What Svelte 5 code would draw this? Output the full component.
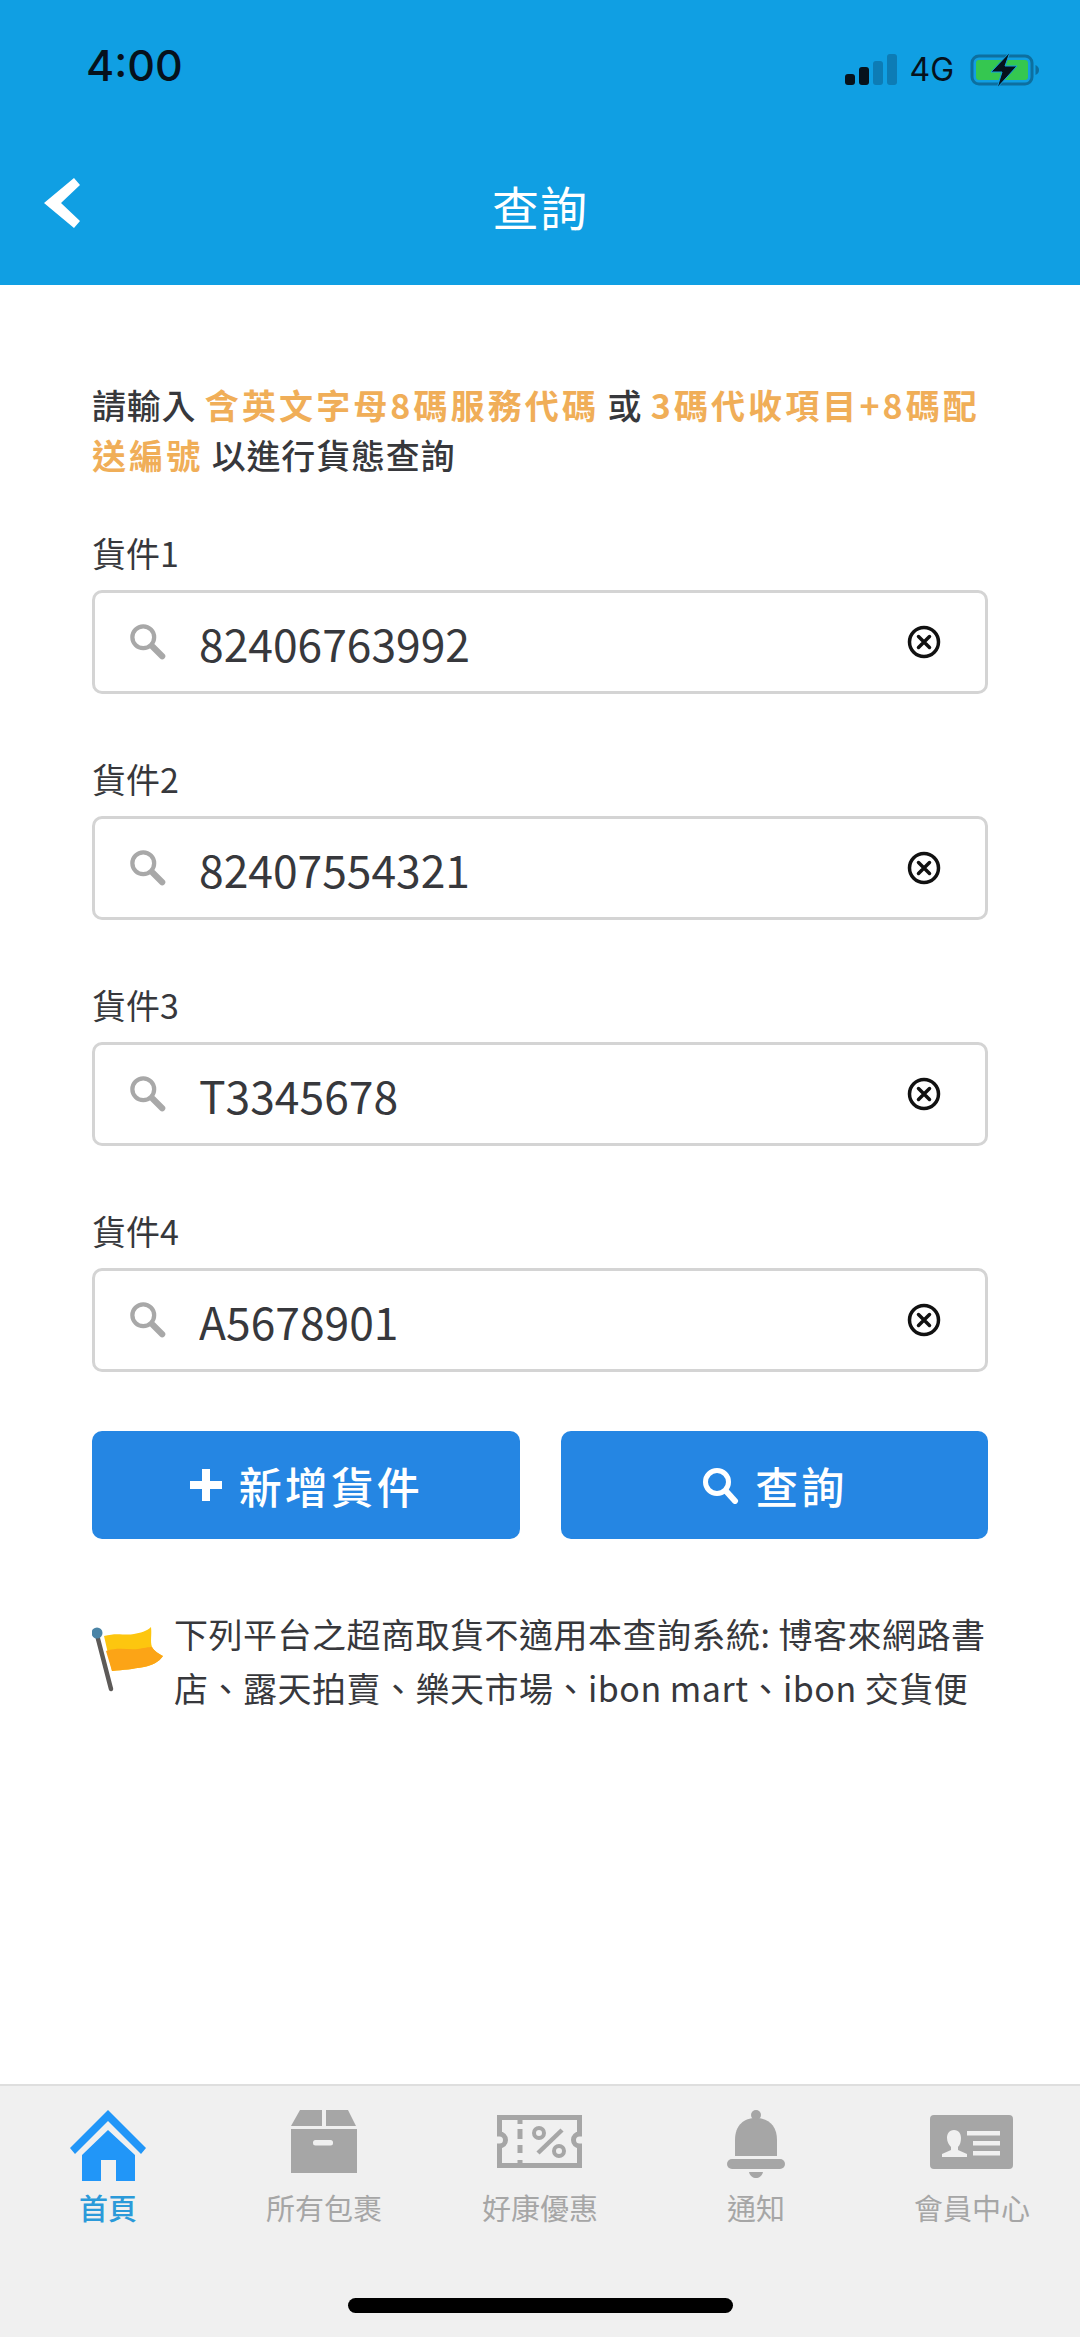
<script>
  const parcels = [
    { label: "貨件1", value: "82406763992" },
    { label: "貨件2", value: "82407554321" },
    { label: "貨件3", value: "T3345678" },
    { label: "貨件4", value: "A5678901" }
  ];

  const tabs = ["home", "box", "coupon", "bell", "card"];
  const tabNames = { home: "首頁", box: "所有包裹", coupon: "好康優惠", bell: "通知", card: "會員中心" };
</script>

<div class="screen">
  <header class="top">
    <div class="status">
      <span class="time">4:00</span>
      <div class="status-right">
        <svg width="52" height="32" viewBox="0 0 52 32">
          <rect x="0" y="20" width="10" height="11" rx="3" fill="#06121c" />
          <rect x="14" y="13" width="10" height="18" rx="3" fill="#06121c" />
          <rect x="28" y="7" width="10" height="24" rx="3" fill="#0d7cb5" />
          <rect x="42" y="0" width="10" height="31" rx="3" fill="#0d7cb5" />
        </svg>
        <span class="net">4G</span>
        <svg class="battery" width="70" height="36" viewBox="0 0 70 36">
          <rect x="2" y="4" width="60" height="28" rx="7" fill="none" stroke="#0d6f9f" stroke-width="3" />
          <rect x="6" y="8" width="52" height="20" rx="3" fill="#35c750" />
          <path d="M65.500 13c2.500 1 3.500 3 3.500 5s-1 4-3.500 5z" fill="#0d6f9f" />
          <path d="M40 0 21 20h11l-5 16 20-22H35z" fill="#06121c" stroke="#109fe3" stroke-width="1" />
        </svg>
      </div>
    </div>
    <div class="nav">
      <svg class="back" width="36" height="50" viewBox="0 0 36 50">
        <path d="M30 0 36 7 17 25l19 18-6 7L0 25z" fill="#fff" />
      </svg>
      <h1>查詢</h1>
    </div>
  </header>

  <main>
    <p class="intro">
      請輸入 <b>含英文字母8碼服務代碼</b> 或 <b>3碼代收項目+8碼配送編號</b> 以進行貨態查詢
    </p>

    {#each parcels as parcel}
      <div class="field">
        <label for={parcel.label}>{parcel.label}</label>
        <div class="input-box">
          <svg class="search" width="36" height="36" viewBox="0 0 38 38">
            <circle cx="14" cy="14" r="11.500" fill="none" stroke="#a8a8a8" stroke-width="4.500" />
            <path d="M24 24l10 10" stroke="#a8a8a8" stroke-width="6.500" stroke-linecap="round" />
          </svg>
          <input id={parcel.label} value={parcel.value} readonly />
          <svg class="clear" width="34" height="34" viewBox="0 0 34 34">
            <circle cx="17" cy="17" r="14.500" fill="none" stroke="#111" stroke-width="3.500" />
            <path d="M11.500 11.500l11 11M22.500 11.500l-11 11" stroke="#111" stroke-width="3.500" stroke-linecap="round" />
          </svg>
        </div>
      </div>
    {/each}

    <div class="actions">
      <button>
        <svg width="34" height="34" viewBox="0 0 34 34">
          <path d="M13 1h8v12h12v8H21v12h-8V21H1v-8h12z" fill="#fff" />
        </svg>
        新增貨件
      </button>
      <button>
        <svg width="38" height="38" viewBox="0 0 38 38">
          <circle cx="16" cy="16" r="11.500" fill="none" stroke="#fff" stroke-width="5" />
          <path d="M25 25l9 10" stroke="#fff" stroke-width="6" stroke-linecap="round" />
        </svg>
        查詢
      </button>
    </div>

    <div class="note">
      <svg class="flag" width="72" height="66" viewBox="0 0 72 66">
        <path d="M12 10c14-4 20 0 30-2 6-1 13-3 17-7 1 8-1 14 1 20 2 4 7 7 11 9-4 6-10 9-19 11-12 2-20 3-32 4z" fill="#fdc60f" />
        <path d="M14 25c12-4 22-1 32-2 5-1 11-2 14-2 2 4 7 7 11 9-4 6-10 9-19 11-12 2-20 3-32 4z" fill="#fca416" />
        <path d="M5 9 19 63" stroke="#5d5a58" stroke-width="4.500" stroke-linecap="round" />
        <circle cx="5" cy="7" r="5.500" fill="#4b84a6" />
      </svg>
      <p>下列平台之超商取貨不適用本查詢系統: 博客來網路書店、露天拍賣、樂天市場、ibon mart、ibon 交貨便</p>
    </div>
  </main>

  <nav class="tabbar">
    <div class="tabs">
      {#each tabs as tab}
        <div class="tab" class:active={tab === "home"}>
          <svg width="90" height="72" viewBox="-5 0 90 72">
            {#if tab === "home"}
              <path d="M40 0 78 38l-5 6-33-33L7 44l-5-6z" fill="#2196f8" />
              <path d="M40 20 67 45v26H48V50H33v21H14V45z" fill="#2196f8" />
            {:else if tab === "box"}
              <path d="M16 0H38V16H7zM42 0H64L72 16H42z" fill="#a6a6a6" />
              <path d="M7 19H73V63H7z" fill="#a6a6a6" />
              <rect x="29" y="30" width="20" height="5.500" rx="2.500" fill="#f0f0f0" />
            {:else if tab === "coupon"}
              <path d="M-.5 7.500H79.500V24a6 6 0 0 0 0 12V55.500H-.5V36a6 6 0 0 0 0-12Z" fill="none" stroke="#a6a6a6" stroke-width="5" />
              <path d="M20 7v7M20 19v10M20 35v8M20 50v5" stroke="#a6a6a6" stroke-width="5" />
              <circle cx="39" cy="23" r="5" fill="none" stroke="#a6a6a6" stroke-width="4" />
              <circle cx="59" cy="41" r="5" fill="none" stroke="#a6a6a6" stroke-width="4" />
              <path d="M62 20 38 43" stroke="#a6a6a6" stroke-width="4.500" />
            {:else if tab === "bell"}
              <circle cx="40" cy="5" r="5" fill="#a6a6a6" />
              <path d="M19 46V30C19 15 28 8 40 8s21 7 21 22v16z" fill="#a6a6a6" />
              <rect x="11" y="49" width="58" height="10" rx="5" fill="#a6a6a6" />
              <path d="M33 62h14c-1 4-4 6-7 6s-6-2-7-6z" fill="#a6a6a6" />
            {:else}
              <rect x="-2" y="5" width="83" height="54" rx="4" fill="#a6a6a6" />
              <path d="M22 20c-5 0-7 4-7 8 0 4 2 7 4 9v3l-9 4v3h25v-3l-9-4v-3c2-2 3-5 3-9 0-4-2-8-7-8z" fill="#f0f0f0" />
              <path d="M35 21H68v4.500H35zM41 31H68v4.500H41zM41 41H68v4.500H41z" fill="#f0f0f0" />
            {/if}
          </svg>
          <span>{tabNames[tab]}</span>
        </div>
      {/each}
    </div>
    <div class="home-indicator"></div>
  </nav>
</div>

<style>
  :global(body) {
    margin: 0;
    background: #fff;
  }
  .screen {
    width: 1080px;
    height: 2337px;
    display: flex;
    flex-direction: column;
    font-family: "Noto Sans CJK TC", "Noto Sans", sans-serif;
    color: #37383c;
    overflow: hidden;
  }

  .top {
    height: 285px;
    background: #109fe3;
    flex-shrink: 0;
  }
  .status {
    height: 130px;
    box-sizing: border-box;
    padding: 40px 40px 0 86px;
    display: flex;
    justify-content: space-between;
    align-items: flex-start;
  }
  .time {
    font-family: Inter, sans-serif;
    font-size: 43px;
    line-height: 50px;
    font-weight: 500;
    color: #06121c;
  }
  .status-right {
    display: flex;
    align-items: center;
    gap: 12px;
    margin-top: 10px;
  }
  .net {
    font-family: Inter, sans-serif;
    font-size: 32px;
    color: #06121c;
    margin-right: 4px;
  }
  .nav {
    position: relative;
    height: 155px;
    display: flex;
    align-items: center;
    justify-content: center;
  }
  .back {
    position: absolute;
    left: 44px;
    top: 48px;
  }
  h1 {
    margin: 0 0 4px;
    font-size: 47px;
    font-weight: 400;
    color: #fff;
    letter-spacing: 1px;
  }

  main {
    flex: 1;
    padding: 95px 92px 0;
  }
  .intro {
    margin: 0 0 48px;
    font-size: 34px;
    line-height: 50px;
    letter-spacing: 0.800px;
    font-weight: 500;
    color: #37383c;
  }
  .intro b {
    font-weight: 700;
    letter-spacing: 3.100px;
    color: #f0ae58;
  }

  .field {
    margin-bottom: 60px;
  }
  label {
    display: block;
    font-size: 34px;
    line-height: 50px;
    margin-bottom: 12px;
  }
  .input-box {
    height: 104px;
    box-sizing: border-box;
    border: 3px solid #d4d4d4;
    border-radius: 10px;
    display: flex;
    align-items: center;
    padding: 0 44px 0 35px;
  }
  .search {
    flex-shrink: 0;
  }
  input {
    flex: 1;
    min-width: 0;
    border: 0;
    outline: 0;
    padding: 0;
    margin-left: 33px;
    background: none;
    font-family: inherit;
    font-size: 44.400px;
    color: #37383c;
  }

  .actions {
    display: flex;
    gap: 41px;
    margin-top: -1px;
  }
  button {
    flex: 1;
    height: 108px;
    border: 0;
    border-radius: 10px;
    background: #2586e3;
    color: #fff;
    font-family: inherit;
    font-size: 43px;
    font-weight: 500;
    letter-spacing: 3px;
    display: flex;
    align-items: center;
    justify-content: center;
    gap: 16px;
  }

  .note {
    display: flex;
    gap: 10px;
    margin-top: 68px;
  }
  .flag {
    flex-shrink: 0;
    margin-top: 19px;
  }
  .note p {
    margin: 0;
    font-size: 34px;
    line-height: 54px;
    letter-spacing: 0.500px;
  }

  .tabbar {
    height: 253px;
    flex-shrink: 0;
    box-sizing: border-box;
    background: #f0f0f0;
    border-top: 2px solid #dedede;
    position: relative;
  }
  .tabs {
    display: grid;
    grid-template-columns: repeat(5, 216px);
    padding-top: 24px;
  }
  .tab {
    display: flex;
    flex-direction: column;
    align-items: center;
    gap: 5px;
    color: #a6a6a6;
    font-size: 29px;
    font-weight: 400;
    line-height: 40px;
  }
  .tab.active {
    color: #2b9ad9;
    font-weight: 500;
  }
  .home-indicator {
    position: absolute;
    left: 348px;
    bottom: 24px;
    width: 385px;
    height: 15px;
    border-radius: 8px;
    background: #000;
  }
</style>
